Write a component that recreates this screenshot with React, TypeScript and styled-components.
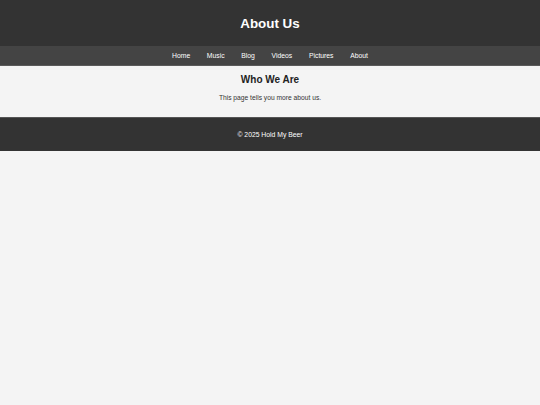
import styled, { createGlobalStyle } from "styled-components";

const GlobalStyle = createGlobalStyle`
  html, body {
    margin: 0;
    padding: 0;
    background: #f4f4f4;
    font-family: "Liberation Sans", Arial, sans-serif;
  }
`;

const Header = styled.header`
  display: flex;
  align-items: center;
  justify-content: center;
  height: 46px;
  background-color: #333;
`;

const Title = styled.h1`
  margin: 0;
  font-size: 13.4px;
  font-weight: 700;
  color: #fff;
`;

const Nav = styled.nav`
  display: flex;
  align-items: center;
  justify-content: center;
  gap: 16.7px;
  height: 19px;
  background-color: #444;
  border-bottom: 1px solid #5a5a5a;
`;

const NavLink = styled.a`
  color: #fff;
  font-size: 6.8px;
  text-decoration: none;
`;

const Main = styled.main`
  display: flex;
  flex-direction: column;
  align-items: center;
  gap: 7.5px;
  padding: 7.5px 0 14px;
`;

const SectionTitle = styled.h2`
  margin: 0;
  font-size: 10px;
  line-height: 12px;
  font-weight: 700;
  color: #222;
`;

const Text = styled.p`
  margin: 0;
  font-size: 6.7px;
  line-height: 10px;
  color: #333;
`;

const Footer = styled.footer`
  display: flex;
  align-items: center;
  justify-content: center;
  height: 33px;
  background-color: #333;
  border-top: 1px solid #555;
  color: #fff;
  font-size: 6.8px;
`;

const links = ["Home", "Music", "Blog", "Videos", "Pictures", "About"];

function App() {
  return (
    <>
      <GlobalStyle />
      <Header>
        <Title>About Us</Title>
      </Header>
      <Nav>
        {links.map((link) => (
          <NavLink key={link} href="#">
            {link}
          </NavLink>
        ))}
      </Nav>
      <Main>
        <SectionTitle>Who We Are</SectionTitle>
        <Text>This page tells you more about us.</Text>
      </Main>
      <Footer>&copy; 2025 Hold My Beer</Footer>
    </>
  );
}

export default App;
